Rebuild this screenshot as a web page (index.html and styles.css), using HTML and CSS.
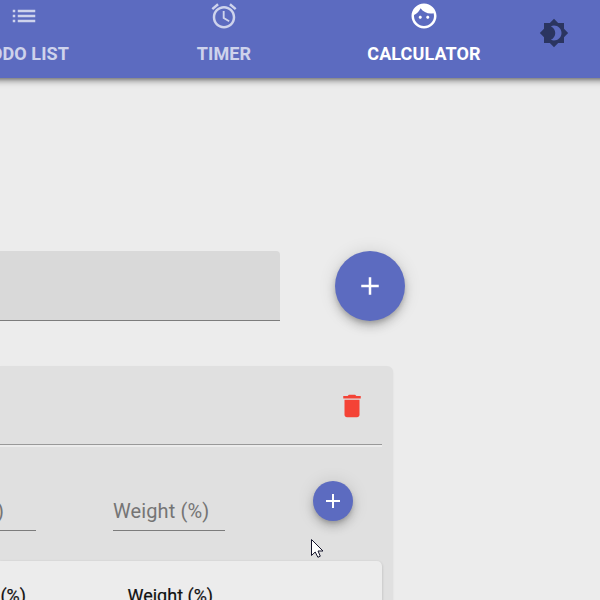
FILE: index.html
```html
<!DOCTYPE html>
<html lang="en">
<head>
<meta charset="utf-8">
<title>Calculator</title>
<link rel="stylesheet" href="styles.css">
</head>
<body>
<header class="bar">
  <nav class="tabs">
    <a class="tab"><svg class="icon" viewBox="0 0 24 24"><path d="M3 9h2V7H3v2zm0 4h2v-2H3v2zm0 4h2v-2H3v2zM7 7v2h14V7H7zm0 6h14v-2H7v2zm0 4h14v-2H7v2z"/></svg><span>TODO LIST</span></a>
    <a class="tab"><svg class="icon" viewBox="0 0 24 24"><path d="M22 5.72l-4.6-3.86-1.29 1.53 4.6 3.86L22 5.72zM7.88 3.39L6.6 1.86 2 5.71l1.29 1.53 4.59-3.85zM12.5 8H11v6l4.75 2.85.75-1.23-4-2.37V8zM12 4c-4.97 0-9 4.03-9 9s4.02 9 9 9c4.97 0 9-4.03 9-9s-4.03-9-9-9zm0 16c-3.87 0-7-3.13-7-7s3.13-7 7-7 7 3.13 7 7-3.13 7-7 7z"/></svg><span>TIMER</span></a>
    <a class="tab active"><svg class="icon" viewBox="0 0 24 24"><path d="M9 11.75c-.69 0-1.25.56-1.25 1.25s.56 1.25 1.25 1.25 1.25-.56 1.25-1.25-.56-1.25-1.25-1.25zm6 0c-.69 0-1.25.56-1.25 1.25s.56 1.25 1.25 1.25 1.25-.56 1.25-1.25-.56-1.25-1.25-1.25zM12 2C6.48 2 2 6.48 2 12s4.48 10 10 10 10-4.48 10-10S17.52 2 12 2zm0 18c-4.41 0-8-3.59-8-8 0-.29.02-.58.05-.86 2.36-1.05 4.23-2.98 5.21-5.37C11.07 8.33 14.05 10 17.42 10c.78 0 1.53-.09 2.25-.26.21.71.33 1.47.33 2.26 0 4.41-3.59 8-8 8z"/></svg><span>CALCULATOR</span></a>
  </nav>
  <svg class="icon theme" viewBox="0 0 24 24"><path d="M20 8.69V4h-4.69L12 .69 8.69 4H4v4.69L.69 12 4 15.31V20h4.69L12 23.31 15.31 20H20v-4.69L23.31 12 20 8.69zM12 18c-.89 0-1.74-.2-2.5-.55C11.56 16.5 13 14.42 13 12s-1.44-4.5-3.5-5.45C10.26 6.2 11.11 6 12 6c3.31 0 6 2.69 6 6s-2.69 6-6 6z"/></svg>
</header>
<main>
  <div class="new-course">
    <div class="course-input"></div>
    <button class="fab"><svg viewBox="0 0 24 24"><path d="M19 13h-6v6h-2v-6H5v-2h6V5h2v6h6v2z"/></svg></button>
  </div>
  <section class="course">
    <div class="course-head">
      <svg class="trash" viewBox="0 0 24 24"><path d="M6 19c0 1.1.9 2 2 2h8c1.1 0 2-.9 2-2V7H6v12zM19 4h-3.500l-1-1h-5l-1 1H5v2h14V4z"/></svg>
    </div>
    <div class="entry">
      <div class="field grade"><span>Grade (%)</span></div>
      <div class="field weight"><span>Weight (%)</span></div>
      <button class="fab small"><svg viewBox="0 0 24 24"><path d="M19 13h-6v6h-2v-6H5v-2h6V5h2v6h6v2z"/></svg></button>
    </div>
    <div class="grades"><span class="col-grade">Grade (%)</span><span>Weight (%)</span></div>
  </section>
</main>
<svg class="cursor" viewBox="0 0 13 20"><path d="M.5 1.500V17.500l3.700-3.500L6.900 19.300l2.400-1.100L7 13h5z"/></svg>
</body>
</html>
```
FILE: styles.css
```css
* { box-sizing: border-box; }

body {
  margin: 0;
  height: 600px;
  overflow: hidden;
  background: #ececec;
  font-family: Roboto, "Liberation Sans", sans-serif;
}

svg { display: block; fill: currentColor; }

.bar {
  display: flex;
  justify-content: flex-end;
  height: 78px;
  margin: 0 -20px;
  padding-right: 51px;
  background: #5c6bc0;
  box-shadow: 0 2px 4px -1px rgba(0, 0, 0, .35), 0 4px 5px rgba(0, 0, 0, .18), 0 1px 10px rgba(0, 0, 0, .16);
}

.tabs { display: flex; flex: none; margin-right: 15px; }

.tab {
  display: flex;
  flex-direction: column;
  align-items: center;
  width: 200px;
  padding-top: 1px;
  color: #fff;
  font-size: 18px;
  font-weight: 700;
  line-height: 24px;
  letter-spacing: .1px;
  opacity: .7;
}

.tab.active { opacity: 1; }
.tab span { margin-top: 11px; }

.icon { flex: none; width: 30px; height: 30px; }
.theme { margin-top: 18px; color: #2b3560; }

.new-course {
  display: flex;
  gap: 55px;
  margin-top: 173px;
}

.course-input {
  width: 280px;
  height: 70px;
  background: #d9d9d9;
  border-bottom: 1px solid #7c7c7c;
  border-radius: 0 4px 0 0;
}

.fab {
  display: flex;
  align-items: center;
  justify-content: center;
  flex: none;
  width: 70px;
  height: 70px;
  padding: 0;
  border: 0;
  border-radius: 50%;
  background: #5c6bc0;
  color: #fff;
  box-shadow: 0 3px 5px -1px rgba(0, 0, 0, .2), 0 6px 10px rgba(0, 0, 0, .14), 0 1px 18px rgba(0, 0, 0, .12);
}

.fab svg { width: 30px; height: 30px; }
.fab.small { width: 40px; height: 40px; margin-left: 88px; }
.fab.small svg { width: 24px; height: 24px; }

.course {
  width: 393px;
  height: 260px;
  margin-top: 45px;
  background: #e0e0e0;
  border-radius: 0 6px 0 0;
  box-shadow: 0 1px 2px rgba(0, 0, 0, .08);
}

.course-head {
  display: flex;
  justify-content: flex-end;
  height: 81px;
  margin-right: 11.500px;
  padding: 25px 14.500px 0 0;
  border-bottom: 2px solid #ececec;
  box-shadow: inset 0 -1px #999;
}

.trash { width: 30px; height: 30px; color: #f44336; }

.entry { display: flex; height: 114px; padding-top: 34px; }

.field {
  height: 50px;
  border-bottom: 1px solid #7c7c7c;
  color: #757575;
  font-size: 20px;
  font-weight: 400;
  line-height: 24px;
  letter-spacing: .12px;
  white-space: nowrap;
}

.field span { display: block; padding-top: 18px; }
.grade { display: flex; justify-content: flex-end; width: 36px; padding-right: 32px; }
.weight { width: 112px; margin-left: 77px; }

.grades {
  display: flex;
  width: 382px;
  height: 65px;
  padding-top: 23px;
  background: #ececec;
  border-radius: 0 5px 0 0;
  box-shadow: 0 1px 3px rgba(0, 0, 0, .2);
  color: #111;
  font-size: 18px;
  font-weight: 400;
  line-height: 24px;
  white-space: nowrap;
  -webkit-text-stroke: .2px #111;
}

.col-grade {
  display: flex;
  justify-content: flex-end;
  width: 26px;
  margin-right: 101.500px;
}

.cursor {
  position: absolute;
  left: 311px;
  top: 538px;
  width: 13px;
  height: 20px;
  fill: #fff;
  stroke: #15152b;
}
```
